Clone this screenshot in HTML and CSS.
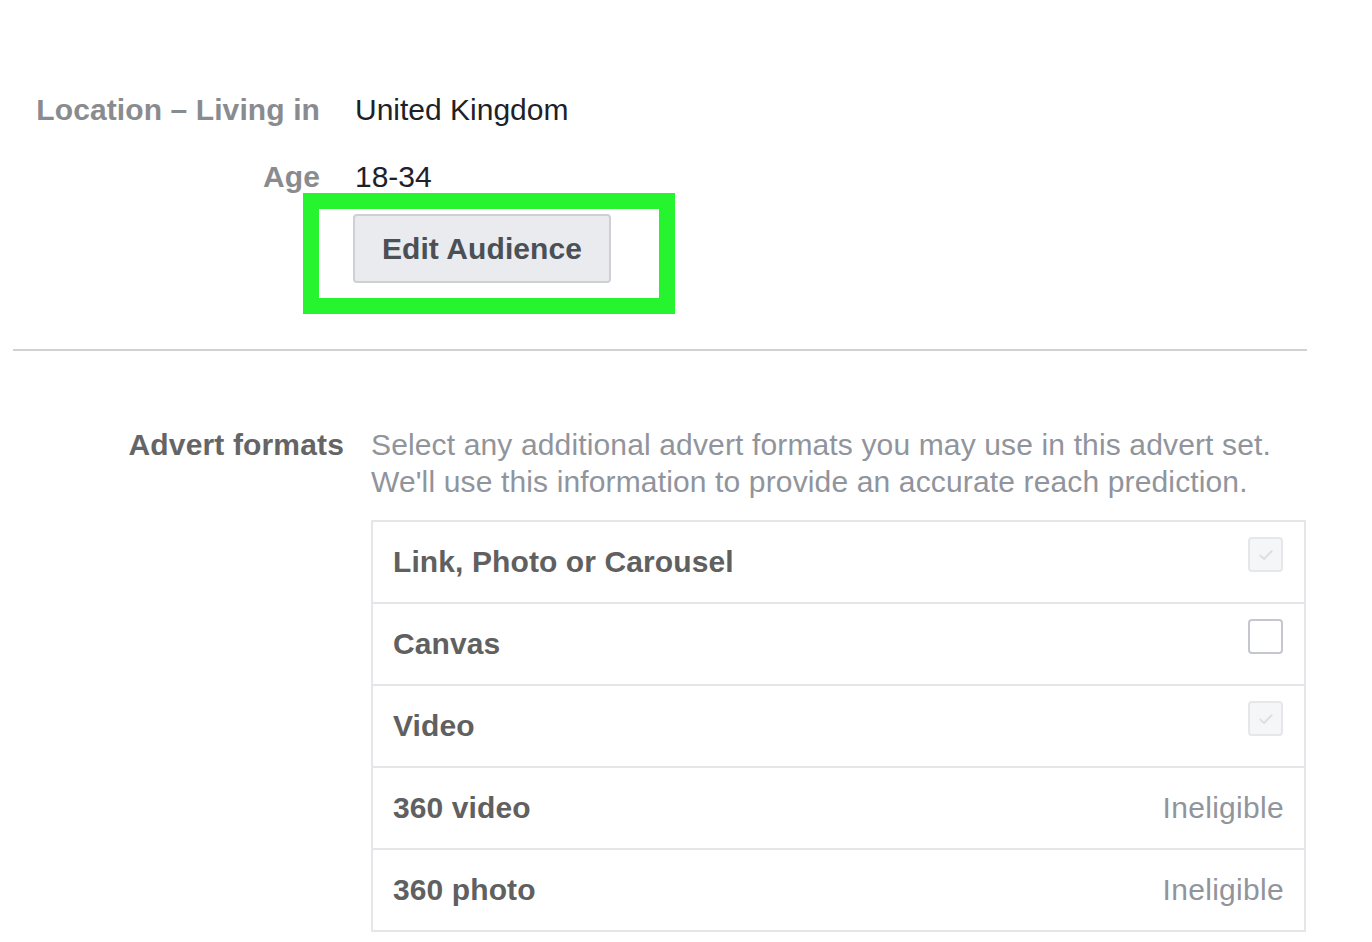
FILE: index.html
```html
<!DOCTYPE html>
<html lang="en">
<head>
<meta charset="utf-8">
<title>Audience and advert formats</title>
<link rel="stylesheet" href="styles.css">
</head>
<body>
<div class="page">
  <section class="audience">
    <div class="info-row">
      <div class="info-label">Location – Living in</div>
      <div class="info-value">United Kingdom</div>
    </div>
    <div class="info-row age">
      <div class="info-label">Age</div>
      <div class="info-value">18-34</div>
    </div>
    <div class="highlight">
      <button class="edit-btn" type="button">Edit Audience</button>
    </div>
  </section>

  <hr class="divider">

  <section class="formats">
    <div class="formats-label">Advert formats</div>
    <div class="formats-body">
      <p class="formats-desc">Select any additional advert formats you may use in this advert set.<br>We'll use this information to provide an accurate reach prediction.</p>
      <div class="format-table">
        <div class="format-row">
          <span class="format-name">Link, Photo or Carousel</span>
          <span class="check disabled">
            <svg viewBox="0 0 16 16" width="20" height="20"><path d="M3.5 8.5 L6.5 11.2 L12.5 5" fill="none" stroke="#dcdfe3" stroke-width="1.6" stroke-linecap="round" stroke-linejoin="round"/></svg>
          </span>
        </div>
        <div class="format-row">
          <span class="format-name">Canvas</span>
          <span class="check empty"></span>
        </div>
        <div class="format-row">
          <span class="format-name">Video</span>
          <span class="check disabled">
            <svg viewBox="0 0 16 16" width="20" height="20"><path d="M3.5 8.5 L6.5 11.2 L12.5 5" fill="none" stroke="#dcdfe3" stroke-width="1.6" stroke-linecap="round" stroke-linejoin="round"/></svg>
          </span>
        </div>
        <div class="format-row">
          <span class="format-name">360 video</span>
          <span class="ineligible">Ineligible</span>
        </div>
        <div class="format-row">
          <span class="format-name">360 photo</span>
          <span class="ineligible">Ineligible</span>
        </div>
      </div>
    </div>
  </section>
</div>
</body>
</html>
```

FILE: styles.css
```css
* { box-sizing: border-box; }

html, body {
  margin: 0;
  padding: 0;
  background: #ffffff;
}

body {
  font-family: "Liberation Sans", Arial, Helvetica, sans-serif;
  font-size: 30px;
  color: #1d2129;
}

.page {
  width: 1372px;
  height: 942px;
  overflow: hidden;
}

.audience {
  padding-top: 92px;
}

.info-row {
  display: flex;
  align-items: center;
  height: 36px;
  line-height: 36px;
}

.info-row.age {
  margin-top: 31px;
}

.info-label {
  width: 320px;
  text-align: right;
  font-weight: bold;
  color: #898b8f;
  letter-spacing: 0.1px;
}

.info-value {
  margin-left: 35px;
  color: #1d2129;
  letter-spacing: 0;
}

.highlight {
  margin-left: 303px;
  margin-top: -2px;
  width: 372px;
  border: 16px solid #25f42e;
  padding: 5px 48px 15px 34px;
}

.edit-btn {
  display: block;
  width: 258px;
  height: 69px;
  margin: 0;
  padding: 0;
  background: #e9ebee;
  border: 2px solid #ced0d4;
  border-radius: 4px;
  font-family: "Liberation Sans", Arial, Helvetica, sans-serif;
  font-size: 30px;
  font-weight: bold;
  color: #4b4f56;
  text-align: center;
  line-height: 65px;
  letter-spacing: 0.1px;
}

.divider {
  margin: 35px 0 0 13px;
  width: 1294px;
  height: 2px;
  border: 0;
  background: #d0d1d3;
}

.formats {
  display: flex;
  padding-top: 75px;
}

.formats-label {
  width: 344px;
  text-align: right;
  font-weight: bold;
  color: #656565;
  line-height: 37px;
  letter-spacing: 0.15px;
}

.formats-body {
  margin-left: 27px;
  width: 935px;
}

.formats-desc {
  margin: 0;
  line-height: 37px;
  color: #90949c;
  font-size: 30px;
  letter-spacing: 0.14px;
}

.format-table {
  margin-top: 20px;
  border: 2px solid #e5e6e9;
  border-top: 0;
}

.format-row {
  display: flex;
  align-items: center;
  justify-content: space-between;
  height: 82px;
  border-top: 2px solid #e5e6e9;
  padding: 0 20px 0 20px;
}

.format-name {
  font-weight: bold;
  color: #606060;
  font-size: 30px;
  letter-spacing: 0.1px;
}

.check {
  align-self: flex-start;
  margin-top: 15px;
  margin-right: 1px;
  width: 35px;
  height: 35px;
  border-radius: 4px;
  display: flex;
  align-items: center;
  justify-content: center;
}

.check.disabled {
  background: #f5f6f7;
  border: 2px solid #e6e7ea;
}

.check.empty {
  background: #ffffff;
  border: 2px solid #c4c7cc;
}

.ineligible {
  color: #90949c;
  font-size: 30px;
  letter-spacing: 0.3px;
}
```
